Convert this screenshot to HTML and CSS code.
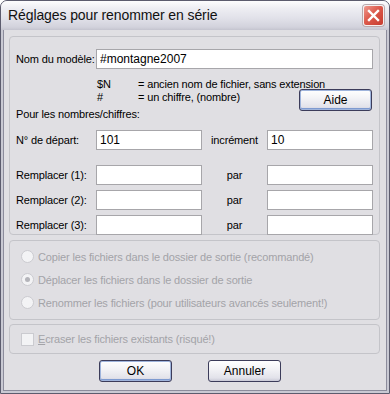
FILE: index.html
```html
<!DOCTYPE html>
<html lang="fr">
<head>
    <meta charset="UTF-8">
    <title>Réglages pour renommer en série</title>
    <link rel="stylesheet" href="styles.css">
</head>
<body>
    <div class="window">
        <div class="titlebar">
            <span class="title">Réglages pour renommer en série</span>
            <span class="close-btn">
                <svg width="13" height="13" viewBox="0 0 13 13">
                    <path d="M2 2 L11 11 M11 2 L2 11" stroke="#fff" stroke-width="2.4" stroke-linecap="square"/>
                </svg>
            </span>
        </div>
        <div class="frame">
            <div class="client">
                <div class="group group-main">
                    <div class="model-row">
                        <label class="lbl">Nom du modèle:</label>
                        <input class="edit" type="text" value="#montagne2007">
                    </div>
                    <div class="legend">
                        <span class="code">$N</span>
                        <span class="desc desc-wide">= ancien nom de fichier, sans extension</span>
                        <span class="code">#</span>
                        <span class="desc">= un chiffre, (nombre)</span>
                        <button class="btn btn-focus aide">Aide</button>
                    </div>
                    <div class="caption">Pour les nombres/chiffres:</div>
                    <div class="fields">
                        <label class="lbl">N° de départ:</label>
                        <input class="edit" type="text" value="101">
                        <span class="mid">incrément</span>
                        <input class="edit" type="text" value="10">
                    </div>
                    <div class="fields fields-replace">
                        <label class="lbl">Remplacer (1):</label>
                        <input class="edit" type="text">
                        <span class="mid">par</span>
                        <input class="edit" type="text">
                        <label class="lbl">Remplacer (2):</label>
                        <input class="edit" type="text">
                        <span class="mid">par</span>
                        <input class="edit" type="text">
                        <label class="lbl">Remplacer (3):</label>
                        <input class="edit" type="text">
                        <span class="mid">par</span>
                        <input class="edit" type="text">
                    </div>
                </div>

                <div class="group group-options">
                    <div class="option"><span class="radio"></span>Copier les fichiers dans le dossier de sortie (recommandé)</div>
                    <div class="option"><span class="radio checked"></span>Déplacer les fichiers dans le dossier de sortie</div>
                    <div class="option"><span class="radio"></span>Renommer les fichiers (pour utilisateurs avancés seulement!)</div>
                </div>

                <div class="group group-overwrite">
                    <div class="option"><span class="check"></span><span><u>E</u>craser les fichiers existants (risqué!)</span></div>
                </div>

                <div class="actions">
                    <button class="btn btn-focus">OK</button>
                    <button class="btn">Annuler</button>
                </div>
            </div>
        </div>
    </div>
</body>
</html>
```

FILE: styles.css
```css
* {
    margin: 0;
    padding: 0;
    box-sizing: border-box;
}

body {
    font-family: 'Liberation Sans', Arial, sans-serif;
    font-size: 11px;
    font-weight: normal;
    letter-spacing: -0.15px;
    color: #000;
    background: #fff;
}

.window {
    width: 390px;
    height: 394px;
    display: flex;
    flex-direction: column;
    border: 1px solid #5c5c6e;
    border-radius: 7px 7px 0 0;
    background: #c9c9d3;
    overflow: hidden;
}

.titlebar {
    height: 29px;
    flex-shrink: 0;
    display: flex;
    align-items: center;
    justify-content: space-between;
    padding: 0 5px 1px 7px;
    background: linear-gradient(#fdfdfe, #eeeef3 25%, #e1e1e9 60%, #d2d2dc 90%, #c4c4cf);
}

.title {
    font-size: 14px;
    color: #111;
    letter-spacing: -0.1px;
}

.close-btn {
    width: 21px;
    height: 21px;
    display: flex;
    align-items: center;
    justify-content: center;
    border: 1px solid #f4f0f0;
    border-radius: 3px;
    background: linear-gradient(135deg, #ef9a8f, #dc5a4c 45%, #c73c30);
    box-shadow: 0 0 0 1px #b9a9ad;
}

.frame {
    flex: 1;
    display: flex;
    padding: 0 2px 2px;
}

.client {
    flex: 1;
    border: 1px solid #8c8c9c;
    border-top: none;
    background: #e0dfe3;
    padding: 6px 6px 0 5px;
    display: flex;
    flex-direction: column;
}

.group {
    border: 1px solid #c4c4c9;
    border-radius: 4px;
    flex-shrink: 0;
}

.group-main {
    height: 199px;
    padding: 12px 6px 0 6px;
}

.lbl {
    white-space: nowrap;
}

.model-row,
.fields {
    display: grid;
    grid-template-columns: 80px 106px 65px 1fr;
    align-items: center;
}

.model-row {
    grid-template-columns: 80px 1fr;
}

.edit {
    height: 20px;
    width: 100%;
    border: 1px solid #a7a6aa;
    background: #fff;
    font-family: inherit;
    font-size: 12px;
    letter-spacing: 0;
    padding: 0 3px;
    outline: none;
    color: #000;
}

.legend {
    display: grid;
    grid-template-columns: 41px 1fr auto;
    margin: 9px 0 0 81px;
    line-height: 13px;
}

.desc-wide {
    grid-column: span 2;
}

.aide {
    width: 52px;
    height: 19px;
    margin: -2px 1px -4px 0;
}

.caption {
    margin-top: 1px;
    line-height: 13px;
}

.fields {
    margin-top: 9px;
}

.fields-replace {
    margin-top: 15px;
    row-gap: 5px;
}

.mid {
    text-align: center;
}

.group-options {
    margin-top: 5px;
    height: 80px;
    padding: 4px 0 0 11px;
    color: #a3a3a8;
}

.option {
    height: 23px;
    display: flex;
    align-items: center;
    gap: 4px;
}

.radio {
    width: 13px;
    height: 13px;
    border-radius: 50%;
    border: 1px solid #cbcbd0;
    background: #f3f3f5;
    display: flex;
    align-items: center;
    justify-content: center;
}

.radio.checked::after {
    content: '';
    width: 5px;
    height: 5px;
    border-radius: 50%;
    background: #b4b4ba;
}

.group-overwrite {
    margin-top: 4px;
    height: 30px;
    padding: 2px 0 0 11px;
    color: #a3a3a8;
}

.group-overwrite .option {
    height: 24px;
}

.check {
    width: 13px;
    height: 13px;
    border: 1px solid #cbcbd0;
    background: #f3f3f5;
}

.actions {
    display: flex;
    gap: 36px;
    padding-left: 90px;
    margin-top: 6px;
}

.btn {
    width: 73px;
    height: 22px;
    font-family: inherit;
    font-size: 12px;
    font-weight: normal;
    letter-spacing: 0;
    color: #000;
    border: 1px solid #3c3c5a;
    border-radius: 3px;
    background: linear-gradient(#ffffff, #f3f3f6 40%, #e2e2ea 85%, #c9c9d6);
}

.btn-focus {
    box-shadow: inset 0 0 0 1px #9fb4dc, inset 0 -1px 0 1px #7e9ad0;
}
```
